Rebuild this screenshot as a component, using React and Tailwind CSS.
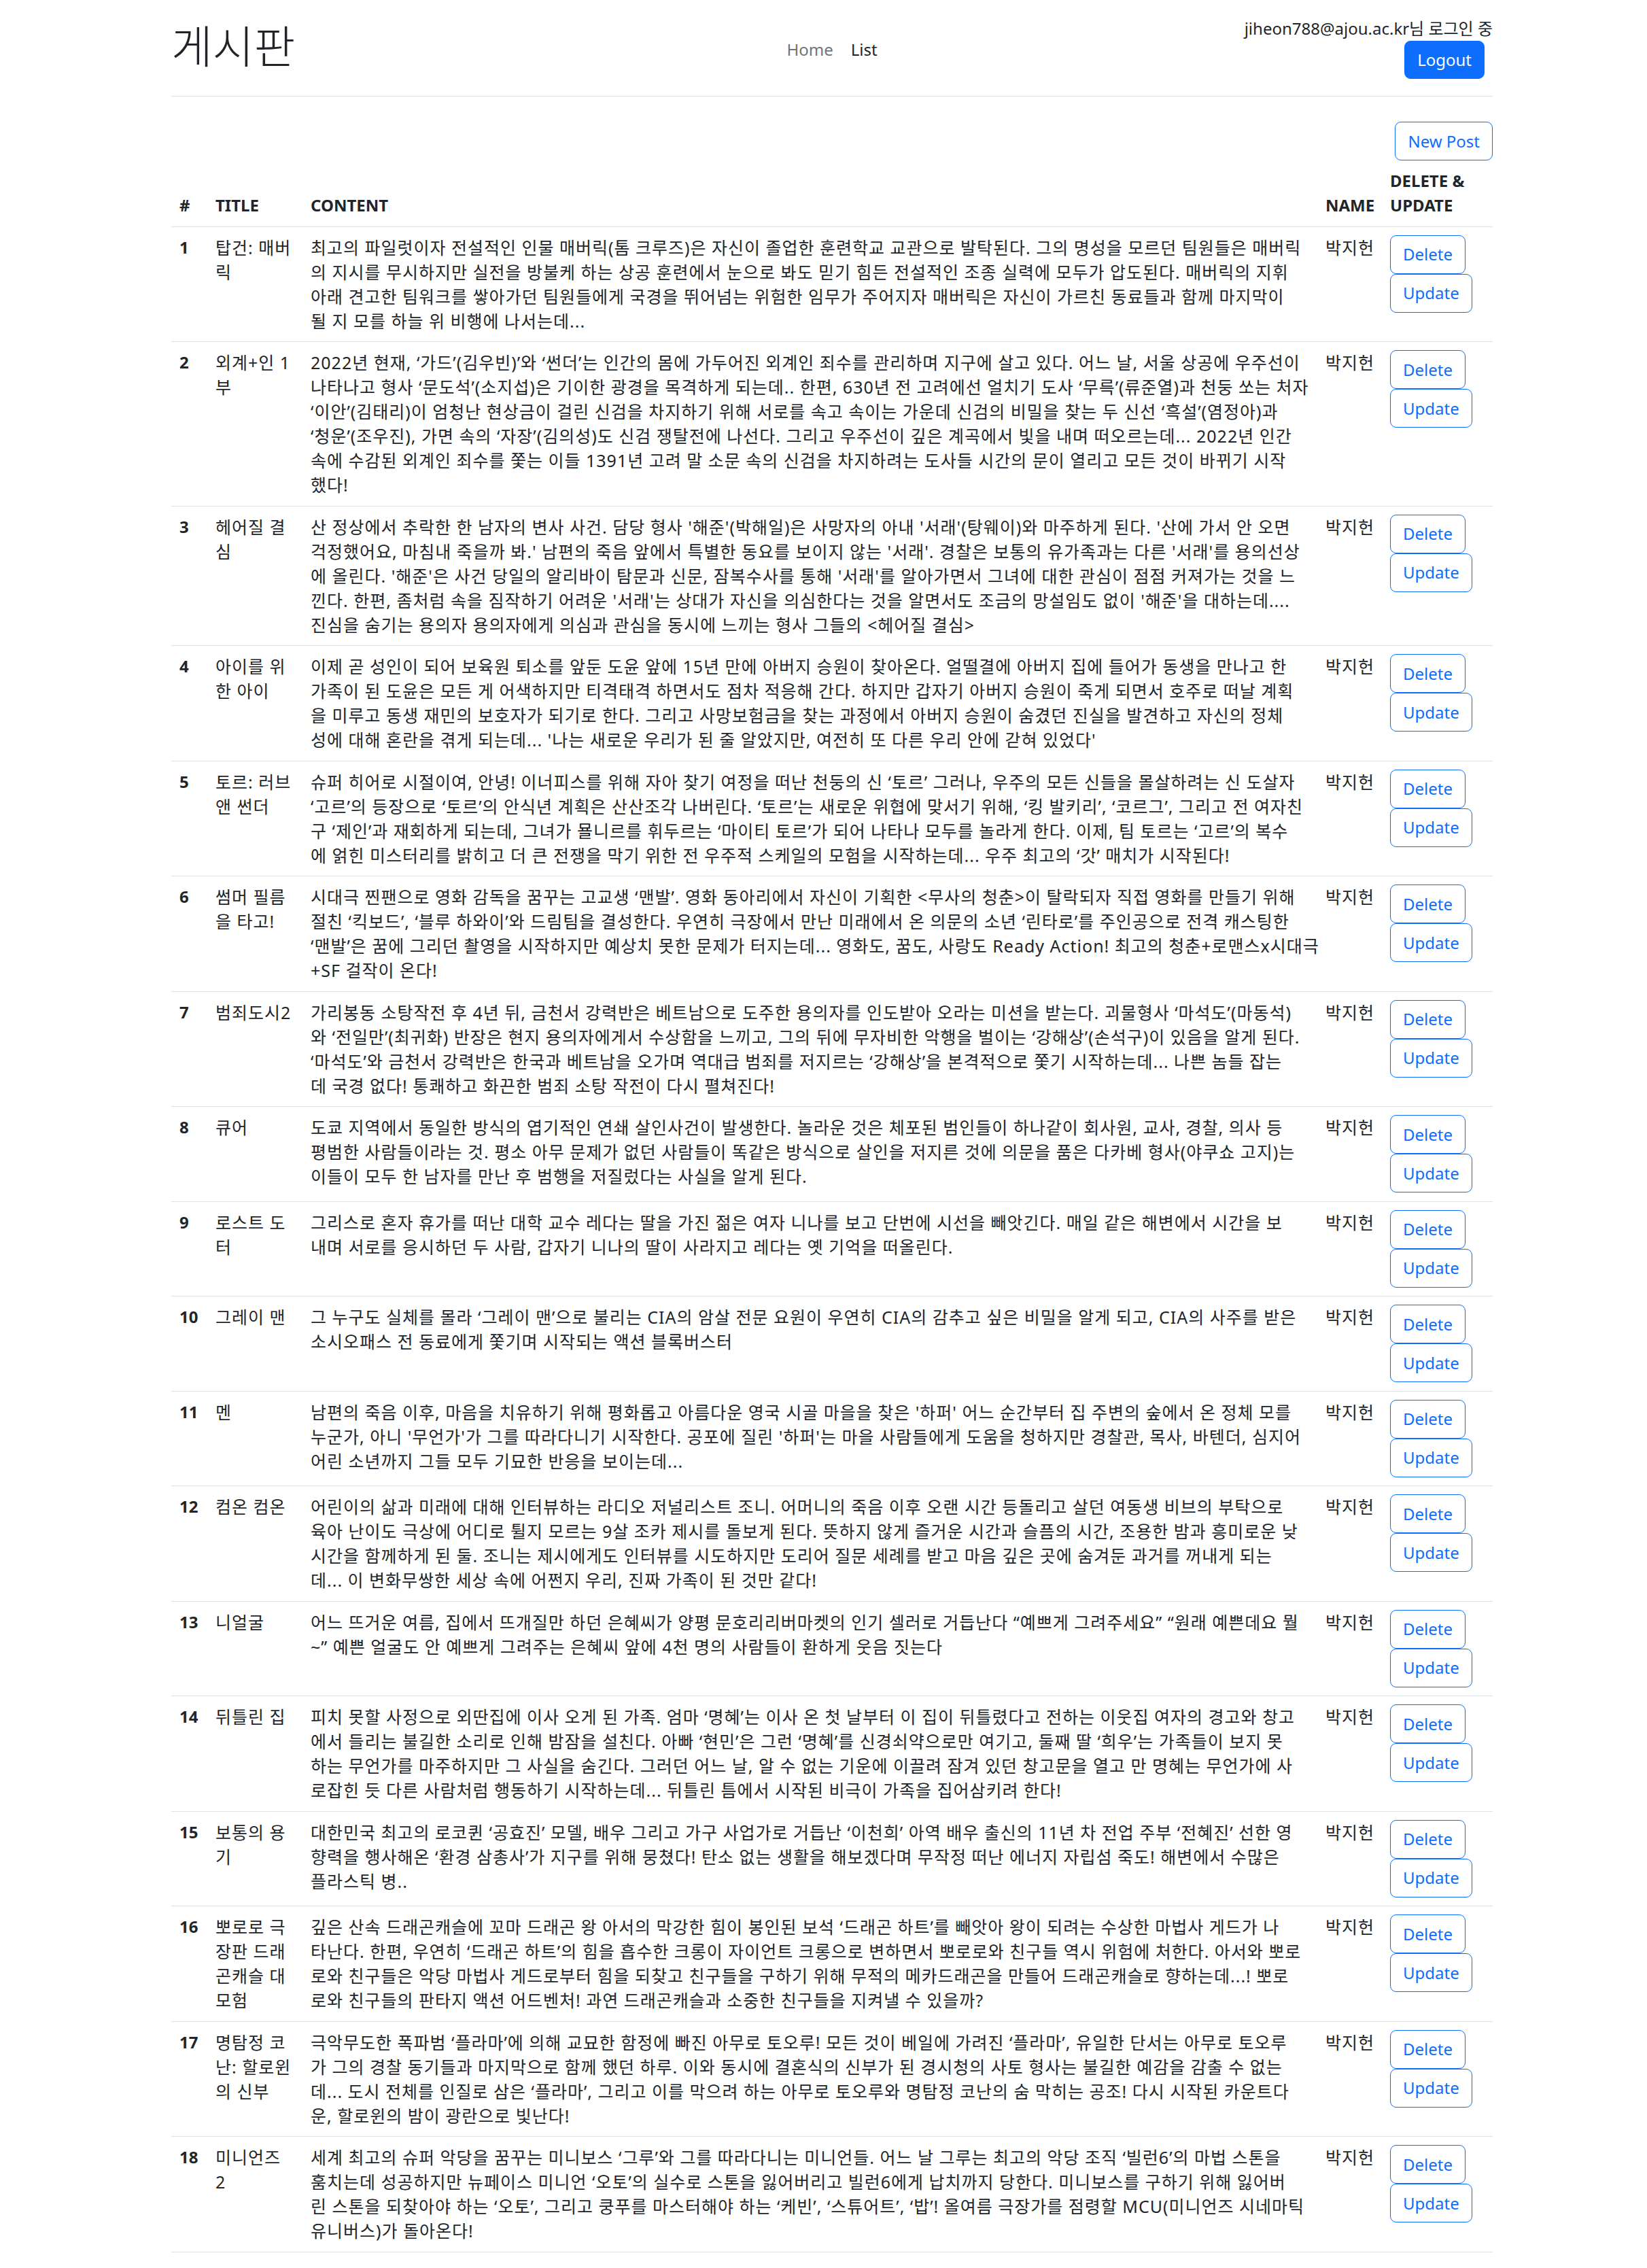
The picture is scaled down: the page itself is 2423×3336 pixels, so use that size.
import React from "react";

const rows = [
  {
    title: ["탑건: 매버", "릭"],
    content: [
      "최고의 파일럿이자 전설적인 인물 매버릭(톰 크루즈)은 자신이 졸업한 훈련학교 교관으로 발탁된다. 그의 명성을 모르던 팀원들은 매버릭",
      "의 지시를 무시하지만 실전을 방불케 하는 상공 훈련에서 눈으로 봐도 믿기 힘든 전설적인 조종 실력에 모두가 압도된다. 매버릭의 지휘",
      "아래 견고한 팀워크를 쌓아가던 팀원들에게 국경을 뛰어넘는 위험한 임무가 주어지자 매버릭은 자신이 가르친 동료들과 함께 마지막이",
      "될 지 모를 하늘 위 비행에 나서는데...",
    ],
  },
  {
    title: ["외계+인 1", "부"],
    content: [
      "2022년 현재, ‘가드’(김우빈)’와 ‘썬더’는 인간의 몸에 가두어진 외계인 죄수를 관리하며 지구에 살고 있다. 어느 날, 서울 상공에 우주선이",
      "나타나고 형사 ‘문도석’(소지섭)은 기이한 광경을 목격하게 되는데.. 한편, 630년 전 고려에선 얼치기 도사 ‘무륵’(류준열)과 천둥 쏘는 처자",
      "‘이안’(김태리)이 엄청난 현상금이 걸린 신검을 차지하기 위해 서로를 속고 속이는 가운데 신검의 비밀을 찾는 두 신선 ‘흑설’(염정아)과",
      "‘청운’(조우진), 가면 속의 ‘자장’(김의성)도 신검 쟁탈전에 나선다. 그리고 우주선이 깊은 계곡에서 빛을 내며 떠오르는데... 2022년 인간",
      "속에 수감된 외계인 죄수를 쫓는 이들 1391년 고려 말 소문 속의 신검을 차지하려는 도사들 시간의 문이 열리고 모든 것이 바뀌기 시작",
      "했다!",
    ],
  },
  {
    title: ["헤어질 결", "심"],
    content: [
      "산 정상에서 추락한 한 남자의 변사 사건. 담당 형사 '해준'(박해일)은 사망자의 아내 '서래'(탕웨이)와 마주하게 된다. '산에 가서 안 오면",
      "걱정했어요, 마침내 죽을까 봐.' 남편의 죽음 앞에서 특별한 동요를 보이지 않는 '서래'. 경찰은 보통의 유가족과는 다른 '서래'를 용의선상",
      "에 올린다. '해준'은 사건 당일의 알리바이 탐문과 신문, 잠복수사를 통해 '서래'를 알아가면서 그녀에 대한 관심이 점점 커져가는 것을 느",
      "낀다. 한편, 좀처럼 속을 짐작하기 어려운 '서래'는 상대가 자신을 의심한다는 것을 알면서도 조금의 망설임도 없이 '해준'을 대하는데....",
      "진심을 숨기는 용의자 용의자에게 의심과 관심을 동시에 느끼는 형사 그들의 <헤어질 결심>",
    ],
  },
  {
    title: ["아이를 위", "한 아이"],
    content: [
      "이제 곧 성인이 되어 보육원 퇴소를 앞둔 도윤 앞에 15년 만에 아버지 승원이 찾아온다. 얼떨결에 아버지 집에 들어가 동생을 만나고 한",
      "가족이 된 도윤은 모든 게 어색하지만 티격태격 하면서도 점차 적응해 간다. 하지만 갑자기 아버지 승원이 죽게 되면서 호주로 떠날 계획",
      "을 미루고 동생 재민의 보호자가 되기로 한다. 그리고 사망보험금을 찾는 과정에서 아버지 승원이 숨겼던 진실을 발견하고 자신의 정체",
      "성에 대해 혼란을 겪게 되는데... '나는 새로운 우리가 된 줄 알았지만, 여전히 또 다른 우리 안에 갇혀 있었다'",
    ],
  },
  {
    title: ["토르: 러브", "앤 썬더"],
    content: [
      "슈퍼 히어로 시절이여, 안녕! 이너피스를 위해 자아 찾기 여정을 떠난 천둥의 신 ‘토르’ 그러나, 우주의 모든 신들을 몰살하려는 신 도살자",
      "‘고르’의 등장으로 ‘토르’의 안식년 계획은 산산조각 나버린다. ‘토르’는 새로운 위협에 맞서기 위해, ‘킹 발키리’, ‘코르그’, 그리고 전 여자친",
      "구 ‘제인’과 재회하게 되는데, 그녀가 묠니르를 휘두르는 ‘마이티 토르’가 되어 나타나 모두를 놀라게 한다. 이제, 팀 토르는 ‘고르’의 복수",
      "에 얽힌 미스터리를 밝히고 더 큰 전쟁을 막기 위한 전 우주적 스케일의 모험을 시작하는데... 우주 최고의 ‘갓’ 매치가 시작된다!",
    ],
  },
  {
    title: ["썸머 필름", "을 타고!"],
    content: [
      "시대극 찐팬으로 영화 감독을 꿈꾸는 고교생 ‘맨발’. 영화 동아리에서 자신이 기획한 <무사의 청춘>이 탈락되자 직접 영화를 만들기 위해",
      "절친 ‘킥보드’, ‘블루 하와이’와 드림팀을 결성한다. 우연히 극장에서 만난 미래에서 온 의문의 소년 ‘린타로’를 주인공으로 전격 캐스팅한",
      "‘맨발’은 꿈에 그리던 촬영을 시작하지만 예상치 못한 문제가 터지는데... 영화도, 꿈도, 사랑도 Ready Action! 최고의 청춘+로맨스x시대극",
      "+SF 걸작이 온다!",
    ],
  },
  {
    title: ["범죄도시2"],
    content: [
      "가리봉동 소탕작전 후 4년 뒤, 금천서 강력반은 베트남으로 도주한 용의자를 인도받아 오라는 미션을 받는다. 괴물형사 ‘마석도’(마동석)",
      "와 ‘전일만’(최귀화) 반장은 현지 용의자에게서 수상함을 느끼고, 그의 뒤에 무자비한 악행을 벌이는 ‘강해상’(손석구)이 있음을 알게 된다.",
      "‘마석도’와 금천서 강력반은 한국과 베트남을 오가며 역대급 범죄를 저지르는 ‘강해상’을 본격적으로 쫓기 시작하는데... 나쁜 놈들 잡는",
      "데 국경 없다! 통쾌하고 화끈한 범죄 소탕 작전이 다시 펼쳐진다!",
    ],
  },
  {
    title: ["큐어"],
    content: [
      "도쿄 지역에서 동일한 방식의 엽기적인 연쇄 살인사건이 발생한다. 놀라운 것은 체포된 범인들이 하나같이 회사원, 교사, 경찰, 의사 등",
      "평범한 사람들이라는 것. 평소 아무 문제가 없던 사람들이 똑같은 방식으로 살인을 저지른 것에 의문을 품은 다카베 형사(야쿠쇼 고지)는",
      "이들이 모두 한 남자를 만난 후 범행을 저질렀다는 사실을 알게 된다.",
    ],
  },
  {
    title: ["로스트 도", "터"],
    content: [
      "그리스로 혼자 휴가를 떠난 대학 교수 레다는 딸을 가진 젊은 여자 니나를 보고 단번에 시선을 빼앗긴다. 매일 같은 해변에서 시간을 보",
      "내며 서로를 응시하던 두 사람, 갑자기 니나의 딸이 사라지고 레다는 옛 기억을 떠올린다.",
    ],
  },
  {
    title: ["그레이 맨"],
    content: [
      "그 누구도 실체를 몰라 ‘그레이 맨’으로 불리는 CIA의 암살 전문 요원이 우연히 CIA의 감추고 싶은 비밀을 알게 되고, CIA의 사주를 받은",
      "소시오패스 전 동료에게 쫓기며 시작되는 액션 블록버스터",
    ],
  },
  {
    title: ["멘"],
    content: [
      "남편의 죽음 이후, 마음을 치유하기 위해 평화롭고 아름다운 영국 시골 마을을 찾은 '하퍼' 어느 순간부터 집 주변의 숲에서 온 정체 모를",
      "누군가, 아니 '무언가'가 그를 따라다니기 시작한다. 공포에 질린 '하퍼'는 마을 사람들에게 도움을 청하지만 경찰관, 목사, 바텐더, 심지어",
      "어린 소년까지 그들 모두 기묘한 반응을 보이는데...",
    ],
  },
  {
    title: ["컴온 컴온"],
    content: [
      "어린이의 삶과 미래에 대해 인터뷰하는 라디오 저널리스트 조니. 어머니의 죽음 이후 오랜 시간 등돌리고 살던 여동생 비브의 부탁으로",
      "육아 난이도 극상에 어디로 튈지 모르는 9살 조카 제시를 돌보게 된다. 뜻하지 않게 즐거운 시간과 슬픔의 시간, 조용한 밤과 흥미로운 낮",
      "시간을 함께하게 된 둘. 조니는 제시에게도 인터뷰를 시도하지만 도리어 질문 세례를 받고 마음 깊은 곳에 숨겨둔 과거를 꺼내게 되는",
      "데... 이 변화무쌍한 세상 속에 어쩐지 우리, 진짜 가족이 된 것만 같다!",
    ],
  },
  {
    title: ["니얼굴"],
    content: [
      "어느 뜨거운 여름, 집에서 뜨개질만 하던 은혜씨가 양평 문호리리버마켓의 인기 셀러로 거듭난다 “예쁘게 그려주세요” “원래 예쁜데요 뭘",
      "~” 예쁜 얼굴도 안 예쁘게 그려주는 은혜씨 앞에 4천 명의 사람들이 환하게 웃음 짓는다",
    ],
  },
  {
    title: ["뒤틀린 집"],
    content: [
      "피치 못할 사정으로 외딴집에 이사 오게 된 가족. 엄마 ‘명혜’는 이사 온 첫 날부터 이 집이 뒤틀렸다고 전하는 이웃집 여자의 경고와 창고",
      "에서 들리는 불길한 소리로 인해 밤잠을 설친다. 아빠 ‘현민’은 그런 ‘명혜’를 신경쇠약으로만 여기고, 둘째 딸 ‘희우’는 가족들이 보지 못",
      "하는 무언가를 마주하지만 그 사실을 숨긴다. 그러던 어느 날, 알 수 없는 기운에 이끌려 잠겨 있던 창고문을 열고 만 명혜는 무언가에 사",
      "로잡힌 듯 다른 사람처럼 행동하기 시작하는데... 뒤틀린 틈에서 시작된 비극이 가족을 집어삼키려 한다!",
    ],
  },
  {
    title: ["보통의 용", "기"],
    content: [
      "대한민국 최고의 로코퀸 ‘공효진’ 모델, 배우 그리고 가구 사업가로 거듭난 ‘이천희’ 아역 배우 출신의 11년 차 전업 주부 ‘전혜진’ 선한 영",
      "향력을 행사해온 ‘환경 삼총사’가 지구를 위해 뭉쳤다! 탄소 없는 생활을 해보겠다며 무작정 떠난 에너지 자립섬 죽도! 해변에서 수많은",
      "플라스틱 병..",
    ],
  },
  {
    title: ["뽀로로 극", "장판 드래", "곤캐슬 대", "모험"],
    content: [
      "깊은 산속 드래곤캐슬에 꼬마 드래곤 왕 아서의 막강한 힘이 봉인된 보석 ‘드래곤 하트’를 빼앗아 왕이 되려는 수상한 마법사 게드가 나",
      "타난다. 한편, 우연히 ‘드래곤 하트’의 힘을 흡수한 크롱이 자이언트 크롱으로 변하면서 뽀로로와 친구들 역시 위험에 처한다. 아서와 뽀로",
      "로와 친구들은 악당 마법사 게드로부터 힘을 되찾고 친구들을 구하기 위해 무적의 메카드래곤을 만들어 드래곤캐슬로 향하는데...! 뽀로",
      "로와 친구들의 판타지 액션 어드벤처! 과연 드래곤캐슬과 소중한 친구들을 지켜낼 수 있을까?",
    ],
  },
  {
    title: ["명탐정 코", "난: 할로윈", "의 신부"],
    content: [
      "극악무도한 폭파범 ‘플라마’에 의해 교묘한 함정에 빠진 아무로 토오루! 모든 것이 베일에 가려진 ‘플라마’, 유일한 단서는 아무로 토오루",
      "가 그의 경찰 동기들과 마지막으로 함께 했던 하루. 이와 동시에 결혼식의 신부가 된 경시청의 사토 형사는 불길한 예감을 감출 수 없는",
      "데... 도시 전체를 인질로 삼은 ‘플라마’, 그리고 이를 막으려 하는 아무로 토오루와 명탐정 코난의 숨 막히는 공조! 다시 시작된 카운트다",
      "운, 할로윈의 밤이 광란으로 빛난다!",
    ],
  },
  {
    title: ["미니언즈", "2"],
    content: [
      "세계 최고의 슈퍼 악당을 꿈꾸는 미니보스 ‘그루’와 그를 따라다니는 미니언들. 어느 날 그루는 최고의 악당 조직 ‘빌런6’의 마법 스톤을",
      "훔치는데 성공하지만 뉴페이스 미니언 ‘오토’의 실수로 스톤을 잃어버리고 빌런6에게 납치까지 당한다. 미니보스를 구하기 위해 잃어버",
      "린 스톤을 되찾아야 하는 ‘오토’, 그리고 쿵푸를 마스터해야 하는 ‘케빈’, ‘스튜어트’, ‘밥’! 올여름 극장가를 점령할 MCU(미니언즈 시네마틱",
      "유니버스)가 돌아온다!",
    ],
  },
];

function OutlineBtn({ children }) {
  return (
    <button
      type="button"
      className="h-[57px] px-[18px] border border-[#0d6efd] rounded-[9px] bg-white text-[#0d6efd] text-[24px] leading-[36px] tracking-normal"
    >
      {children}
    </button>
  );
}

const cell = "align-top px-[12px] py-[12.25px] border-b border-[#dee2e6] text-left";
const head = "align-bottom px-[12px] py-[12.25px] border-b border-[#dee2e6] text-left font-bold";
const kr = " text-[25px] tracking-[1px]";

export default function App() {
  return (
    <div className="min-h-screen bg-white text-[#212529] font-['Noto_Sans','Noto_Sans_CJK_KR',sans-serif] text-[24px] leading-[36px]">
      <div className="ml-[252px] w-[1944px]">
        <header className="grid grid-cols-3 pt-[24px] pb-[25px] border-b border-[#dee2e6]">
          <h1 className="self-start mt-[3px] text-[66px] leading-[80px] font-light">게시판</h1>
          <nav className="self-start mt-[31px] flex justify-center gap-[26px]">
            <a className="text-[#737373]">Home</a>
            <a className="text-[#212529]">List</a>
          </nav>
          <div className="flex flex-col items-end">
            <div className="whitespace-nowrap">jiheon788@ajou.ac.kr님 로그인 중</div>
            <button
              type="button"
              className="mr-[12px] h-[56px] px-[18px] rounded-[9px] bg-[#0d6efd] border border-[#0d6efd] text-white text-[24px] leading-[36px]"
            >
              Logout
            </button>
          </div>
        </header>

        <div className="flex justify-end mt-[37px]">
          <OutlineBtn>New Post</OutlineBtn>
        </div>

        <table className="w-[1944px] table-fixed border-separate border-spacing-0">
          <colgroup>
            <col className="w-[53px]" />
            <col className="w-[140px]" />
            <col className="w-[1493px]" />
            <col className="w-[95px]" />
            <col className="w-[163px]" />
          </colgroup>
          <thead>
            <tr>
              <th className={head}>#</th>
              <th className={head}>TITLE</th>
              <th className={head}>CONTENT</th>
              <th className={head}>NAME</th>
              <th className={head}>
                DELETE &amp;
                <br />
                UPDATE
              </th>
            </tr>
          </thead>
          <tbody>
            {rows.map((r, i) => (
              <tr key={i}>
                <th className={cell + " font-bold"}>{i + 1}</th>
                <td className={cell + kr}>
                  {r.title.map((t, j) => (
                    <div key={j} className="whitespace-nowrap">
                      {t}
                    </div>
                  ))}
                </td>
                <td className={cell + kr}>
                  {r.content.map((t, j) => (
                    <div key={j} className="whitespace-nowrap">
                      {t}
                    </div>
                  ))}
                </td>
                <td className={cell + kr + " whitespace-nowrap"}>박지헌</td>
                <td className={cell}>
                  <div className="flex flex-col items-start">
                    <OutlineBtn>Delete</OutlineBtn>
                    <OutlineBtn>Update</OutlineBtn>
                  </div>
                </td>
              </tr>
            ))}
          </tbody>
        </table>
      </div>
    </div>
  );
}
